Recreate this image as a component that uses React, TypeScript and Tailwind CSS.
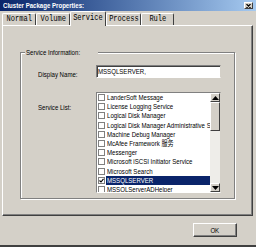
import React from "react";

const items = [
  "LanderSoft Message",
  "License Logging Service",
  "Logical Disk Manager",
  "Logical Disk Manager Administrative Service",
  "Machine Debug Manager",
  "McAfee Framework 服务",
  "Messenger",
  "Microsoft iSCSI Initiator Service",
  "Microsoft Search",
  "MSSQLSERVER",
  "MSSQLServerADHelper",
];

const tabs = [
  { label: "Normal", w: "w-[34px]" },
  { label: "Volume", w: "w-[34px]" },
  { label: "Service", w: "w-[36px]", active: true },
  { label: "Process", w: "w-[35px]" },
  { label: "Rule", w: "w-[33px]" },
];

function Squeeze({ children, className = "" }: { children: React.ReactNode; className?: string }) {
  return (
    <span className={"inline-block whitespace-nowrap origin-left scale-x-[0.76] " + className}>{children}</span>
  );
}

function Arrow({ up }: { up?: boolean }) {
  return (
    <svg width="7" height="4" viewBox="0 0 7 4">
      {up ? <path d="M3.5 0 L7 4 L0 4 Z" fill="#000" /> : <path d="M0 0 L7 0 L3.5 4 Z" fill="#000" />}
    </svg>
  );
}

export default function App() {
  return (
    <div className="w-[256px] h-[247px] bg-[#d4d0c8] flex flex-col overflow-hidden text-black text-[8px] leading-[9px] font-['Liberation_Sans','Noto_Sans_CJK_SC',sans-serif]">
      {/* Title bar */}
      <div className="h-[11px] shrink-0 flex items-center pl-[3px] pr-[3px] bg-gradient-to-r from-[#0a246a] to-[#a6caf0]">
        <Squeeze className="font-bold text-white">Cluster Package Properties:</Squeeze>
        <div className="ml-auto w-[9px] h-[7px] bg-[#d4d0c8] border border-t-white border-l-white border-b-[#404040] border-r-[#404040] flex items-center justify-center">
          <svg width="5" height="4" viewBox="0 0 5 4">
            <path d="M0.5 0 L4.5 4 M4.5 0 L0.5 4" stroke="#000" strokeWidth="1.1" />
          </svg>
        </div>
      </div>

      {/* Tabs */}
      <div className="h-[14px] shrink-0 flex items-end pl-[2px] font-['Liberation_Mono',monospace]">
        {tabs.map((t) =>
          t.active ? (
            <div
              key={t.label}
              className={
                t.w +
                " h-[15px] -mb-[1px] relative z-10 bg-[#d4d0c8] border-l border-t border-white border-r border-r-[#404040] rounded-t-[2px] flex items-center justify-center pb-[2px] text-[9px]"
              }
            >
              <span className="inline-block whitespace-nowrap origin-center scale-x-[0.78]">{t.label}</span>
            </div>
          ) : (
            <div
              key={t.label}
              className={
                t.w +
                " h-[12px] border-l border-t border-white border-r border-r-[#404040] rounded-t-[2px] flex items-center justify-center text-[9px]"
              }
            >
              <span className="inline-block whitespace-nowrap origin-center scale-x-[0.78]">{t.label}</span>
            </div>
          )
        )}
      </div>

      {/* Panel */}
      <div className="ml-[2px] w-[251px] h-[191px] shrink-0 border border-t-white border-l-white border-r-[#404040] border-b-[#404040] shadow-[inset_-1px_-1px_0_#808080] pt-[26px] pl-[17px]">
        <div className="relative w-[215px] h-[147px] border border-[#808080] shadow-[1px_1px_0_#ffffff,inset_1px_1px_0_#ffffff] pt-[12px] pl-[17px]">
          <div className="absolute -top-[5px] left-[4px] px-[1px] bg-[#d4d0c8]">
            <Squeeze>Service Information:</Squeeze>
          </div>

          <div className="flex">
            <div className="w-[58px] pt-[5px]">
              <Squeeze>Display Name:</Squeeze>
            </div>
            <div className="w-[125px] h-[13px] bg-white border border-t-[#808080] border-l-[#808080] border-b-white border-r-[#d4d0c8] shadow-[inset_1px_1px_0_#404040] pl-[1px] flex items-center">
              <Squeeze>MSSQLSERVER,</Squeeze>
            </div>
          </div>

          <div className="flex mt-[13px]">
            <div className="w-[58px] pt-[11px]">
              <Squeeze>Service List:</Squeeze>
            </div>
            <div className="w-[125px] h-[101px] bg-white border border-t-[#808080] border-l-[#808080] border-b-white border-r-[#d4d0c8] flex overflow-hidden">
              <div className="flex-1 flex flex-col overflow-hidden">
                {items.map((it) => {
                  const sel = it === "MSSQLSERVER";
                  return (
                    <div key={it} className="h-[9.2px] shrink-0 flex items-center pl-[1px]">
                      <div className="w-[7px] h-[7px] shrink-0 bg-white border border-[#808080] flex items-center justify-center">
                        {sel && (
                          <svg width="5" height="5" viewBox="0 0 5 5">
                            <path d="M0.5 2.5 L2 4 L4.5 0.8" stroke="#000" strokeWidth="1.1" fill="none" />
                          </svg>
                        )}
                      </div>
                      <div
                        className={
                          "ml-[1px] flex-1 h-full flex items-center pl-[1px] overflow-hidden " +
                          (sel ? "bg-[#0a246a] text-white" : "")
                        }
                      >
                        <Squeeze>{it}</Squeeze>
                      </div>
                    </div>
                  );
                })}
              </div>
              {/* Scrollbar */}
              <div className="w-[10px] shrink-0 flex flex-col bg-[#eeede9]">
                <div className="h-[9px] bg-[#d4d0c8] border border-t-white border-l-white border-b-[#404040] border-r-[#404040] flex items-center justify-center">
                  <Arrow up />
                </div>
                <div className="h-[29px] bg-[#d4d0c8] border border-t-white border-l-white border-b-[#404040] border-r-[#404040]" />
                <div className="flex-1" />
                <div className="h-[9px] bg-[#d4d0c8] border border-t-white border-l-white border-b-[#404040] border-r-[#404040] flex items-center justify-center">
                  <Arrow />
                </div>
              </div>
            </div>
          </div>
        </div>
      </div>

      {/* Bottom buttons */}
      <div className="flex-1 flex justify-end items-start pt-[7px] pr-[19px] border-b-2 border-b-[#404040]">
        <div className="w-[44px] h-[14px] bg-[#d4d0c8] border border-t-white border-l-white border-b-[#404040] border-r-[#404040] shadow-[inset_-1px_-1px_0_#808080] flex items-center justify-center">
          <span className="inline-block whitespace-nowrap origin-center scale-x-[0.76]">OK</span>
        </div>
      </div>
    </div>
  );
}
